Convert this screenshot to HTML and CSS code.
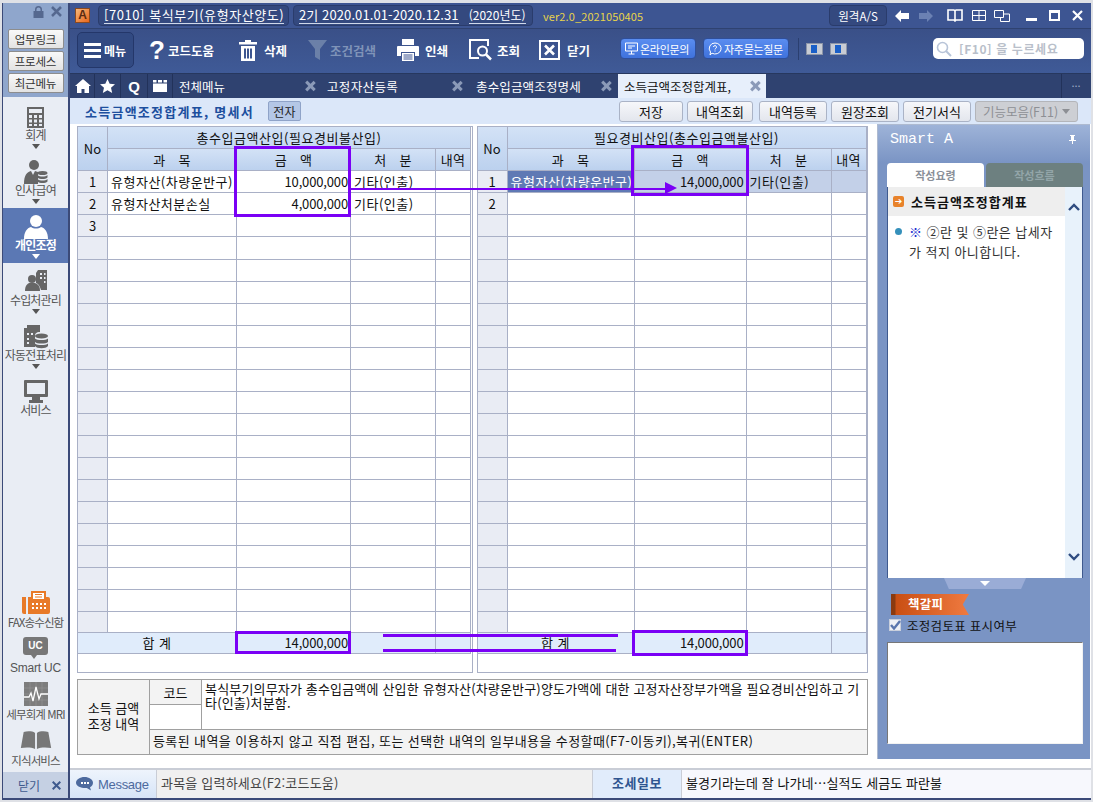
FILE: index.html
```html
<!DOCTYPE html>
<html lang="ko">
<head>
<meta charset="utf-8">
<title>소득금액조정합계표</title>
<link rel="stylesheet" href="styles.css">
</head>
<body>
<div class="window">
  <aside class="side">
    <div class="side-top">
      <div class="side-ctl">
        <svg width="11" height="12" viewBox="0 0 11 12"><path d="M2 5V3.500a3.500 3.500 0 0 1 7 0V5h1.500v7H.5V5zM3.500 5h4V3.500a2 2 0 0 0-4 0z" fill="#55688f"/></svg>
        <svg width="11" height="11" viewBox="0 0 11 11"><path d="M1 1l9 9M10 1l-9 9" stroke="#55688f" stroke-width="2.500"/></svg>
      </div>
      <button class="side-btn">업무링크</button>
      <button class="side-btn">프로세스</button>
      <button class="side-btn">최근메뉴</button>
    </div>
    <div class="side-item first">
      <svg width="17" height="21" viewBox="0 0 17 21"><path d="M0 0h17v21H0z" fill="#666"/><path d="M2 2h13v4H2z" fill="#e9edf4"/><path d="M2 8h3v3H2zM7 8h3v3H7zM12 8h3v3h-3zM2 12.500h3v3H2zM7 12.500h3v3H7zM12 12.500h3v3h-3zM2 17h3v2H2zM7 17h3v2H7zM12 17h3v2h-3z" fill="#e9edf4"/></svg>
      <span class="side-label">회계</span><i class="tri"></i>
    </div>
    <div class="side-item">
      <svg width="24" height="24" viewBox="0 0 24 24"><circle cx="10" cy="5" r="5" fill="#666"/><path d="M0 24c0-9 3-12 7-13l2 4 2-4c1 0 2 1 3 1v12z" fill="#666"/><ellipse cx="18.500" cy="13" rx="5" ry="2" fill="#666"/><path d="M13.500 15c2 2 8 2 10 0v2.500c-2 2-8 2-10 0zM13.500 19c2 2 8 2 10 0v2.500c-2 2-8 2-10 0z" fill="#666"/></svg>
      <span class="side-label">인사급여</span><i class="tri"></i>
    </div>
    <div class="side-item active">
      <svg width="24" height="24" viewBox="0 0 24 24"><circle cx="12" cy="6" r="6" fill="#fff"/><path d="M0 24c0-7 3-11 7-12 3 2 7 2 10 0 4 1 7 5 7 12z" fill="#fff"/></svg>
      <span class="side-label">개인조정</span><i class="tri"></i>
    </div>
    <div class="side-item">
      <svg width="22" height="22" viewBox="0 0 22 22"><path d="M13 0h9v20h-6c-1-3-2-6-5-7V3z" fill="#666"/><path d="M15 3h2v2h-2zM19 3h1.500v2H19zM15 7h2v2h-2zM19 7h1.500v2H19zM19 11h1.500v2H19z" fill="#e9edf4"/><circle cx="7" cy="9" r="4" fill="#666"/><path d="M0 21c0-5 2-7 4-8h6c3 1 5 3 5 8z" fill="#666"/></svg>
      <span class="side-label">수입처관리</span><i class="tri"></i>
    </div>
    <div class="side-item">
      <svg width="24" height="24" viewBox="0 0 24 24"><path d="M0 3h3V0h13v7c-4 0-5 2-5 4v11H0z" fill="#666"/><path d="M3 8h2v2H3zM7 8h2v2H7zM3 13h2v2H3zM3 17h2v2H3z" fill="#e9edf4"/><ellipse cx="17.500" cy="11" rx="6.500" ry="2.500" fill="#666"/><path d="M11 13.500c2 2 11 2 13 0V17c-2 2-11 2-13 0zM11 18.500c2 2 11 2 13 0V21c-2 3-11 3-13 0z" fill="#666"/></svg>
      <span class="side-label">자동전표처리</span><i class="tri"></i>
    </div>
    <div class="side-item">
      <svg width="24" height="23" viewBox="0 0 24 23"><path d="M1 0h22a1 1 0 0 1 1 1v15a1 1 0 0 1-1 1h-7v3h3v3H5v-3h3v-3H1a1 1 0 0 1-1-1V1a1 1 0 0 1 1-1zm2 3v11h18V3z" fill="#666"/></svg>
      <span class="side-label">서비스</span>
    </div>
    <div class="side-fill"></div>
    <div class="side-tool tool-fax">
      <svg width="28" height="23" viewBox="0 0 28 23"><path d="M0 6h4v17H2a2 2 0 0 1-2-2z" fill="#e87a28"/><path d="M6 6h3V0h15v6h2a2 2 0 0 1 2 2v13a2 2 0 0 1-2 2H6z" fill="#e87a28"/><path d="M11 2h11v6H11z" fill="#fff"/><path d="M13 3.500h7M13 6h7" stroke="#e87a28"/><path d="M10 12h2v2h-2zM14 12h2v2h-2zM18 12h2v2h-2zM22 12h2v2h-2zM10 16h2v2h-2zM14 16h2v2h-2zM18 16h2v2h-2zM22 16h2v2h-2z" fill="#fff"/></svg>
      <span class="tool-label">FAX송수신함</span>
    </div>
    <div class="side-tool tool-uc">
      <span class="uc">UC</span>
      <span class="tool-label latin">Smart UC</span>
    </div>
    <div class="side-tool tool-mri">
      <svg width="24" height="24" viewBox="0 0 24 24"><path d="M0 0h24v24H0z" fill="#7d7d7d"/><path d="M0 6h24M0 12h24M0 18h24M6 0v24M12 0v24M18 0v24" stroke="#999" stroke-width=".6"/><path d="M0 15h5l2-4 2 8 3-14 3 12 2-5h7" fill="none" stroke="#fff" stroke-width="1.300"/></svg>
      <span class="tool-label">세무회계 MRI</span>
    </div>
    <div class="side-tool tool-book">
      <svg width="32" height="18" viewBox="0 0 32 19"><path d="M3 1c4-1 9-1 12 1v17c-4-2-10-2-15-1zM29 1c-4-1-9-1-12 1v17c4-2 10-2 15-1z" fill="#777"/></svg>
      <span class="tool-label">지식서비스</span>
    </div>
    <div class="side-close"><span>닫기</span><svg width="9" height="9" viewBox="0 0 9 9"><path d="M.7.7l7.600 7.600M8.300.7L.7 8.300" stroke="#3f5a8e" stroke-width="2"/></svg></div>
  </aside>

  <main class="main">
    <header class="titlebar">
      <span class="logo">A</span>
      <div class="pill pill-a"><span>[7010] 복식부기(유형자산양도)</span></div>
      <div class="pill pill-b"><span>2기 2020.01.01-2020.12.31</span><span class="pill-year">(2020년도)</span></div>
      <span class="ver">ver2.0_2021050405</span>
      <button class="remote">원격A/S</button>
      <svg class="nav" width="14" height="12" viewBox="0 0 14 12"><path d="M0 6l6-6v3h8v6H6v3z" fill="#fff"/></svg>
      <svg class="nav-next" width="14" height="12" viewBox="0 0 14 12"><path d="M14 6L8 0v3H0v6h8v3z" fill="#6b81b3"/></svg>
      <svg class="win-book" width="16" height="13" viewBox="0 0 16 13"><path d="M1 1h6l1 1 1-1h6v10H9l-1 1-1-1H1zM8 2v9" fill="none" stroke="#fff" stroke-width="1.600"/></svg>
      <svg class="win-grid" width="14" height="11" viewBox="0 0 14 11"><path d="M.5.5h13v10H.5zM.5 5.500h13M7 .5v10" fill="none" stroke="#fff"/></svg>
      <svg class="win-tile" width="16" height="12" viewBox="0 0 16 12"><path d="M.5.5h9v7h-9zM9.500 4h6v7.500h-9V7.500" fill="none" stroke="#fff"/></svg>
      <span class="win-min"></span>
      <span class="win-max"></span>
      <svg class="win-x" width="11" height="11" viewBox="0 0 11 11"><path d="M1 1l9 9M10 1l-9 9" stroke="#fff" stroke-width="2.200"/></svg>
    </header>

    <nav class="toolbar">
      <button class="menu-btn">
        <svg width="17" height="15" viewBox="0 0 17 15"><path d="M0 0h17v3H0zM0 6h17v3H0zM0 12h17v3H0z" fill="#fff"/></svg>
        <span>메뉴</span>
      </button>
      <a class="tool t-help"><span class="q">?</span><span>코드도움</span></a>
      <a class="tool t-del">
        <svg width="18" height="21" viewBox="0 0 18 21"><path d="M6 0h6v2h6v2.500H0V2h6zM2 6h14v15H2zM5 8.500v10h2v-10zM8 8.500v10h2v-10zM11 8.500v10h2v-10z" fill="#fff" fill-rule="evenodd"/></svg>
        <span>삭제</span>
      </a>
      <a class="tool t-find dim">
        <svg width="19" height="20" viewBox="0 0 19 20"><path d="M0 0h19l-7 9v11l-5-3V9z" fill="#6b80a8"/></svg>
        <span>조건검색</span>
      </a>
      <a class="tool t-print">
        <svg width="22" height="22" viewBox="0 0 22 22"><path d="M5 0h12v6H5z" fill="#fff"/><path d="M0 8a1 1 0 0 1 1-1h20a1 1 0 0 1 1 1v9h-4v-4H4v4H0z" fill="#fff"/><path d="M5 14h12v8H5z" fill="#fff"/><path d="M6.500 16h9M6.500 18h9M6.500 20h9" stroke="#3d5592"/></svg>
        <span>인쇄</span>
      </a>
      <a class="tool t-view">
        <svg width="23" height="22" viewBox="0 0 23 22"><path d="M14 1H1v18h9" fill="none" stroke="#fff" stroke-width="2"/><path d="M1 1h18v6" fill="none" stroke="#fff" stroke-width="2"/><circle cx="13.500" cy="12" r="4.500" fill="none" stroke="#fff" stroke-width="2"/><path d="M17 15.500l5 5" stroke="#fff" stroke-width="2.500"/></svg>
        <span>조회</span>
      </a>
      <a class="tool t-close">
        <svg width="21" height="20" viewBox="0 0 21 20"><path d="M1 1h19v18H1z" fill="none" stroke="#fff" stroke-width="2"/><path d="M6 5.500l9 9M15 5.500l-9 9" stroke="#fff" stroke-width="2.600"/></svg>
        <span>닫기</span>
      </a>
      <button class="blue-btn b-online">
        <svg width="13" height="13" viewBox="0 0 13 13"><path d="M.5 1h12v8h-12zM6.500 9v3M3.500 12h6M3 4h7M3 6h4" fill="none" stroke="#fff"/></svg>
        <span>온라인문의</span>
      </button>
      <button class="blue-btn b-faq">
        <svg width="14" height="14" viewBox="0 0 14 14"><path d="M7 1a6 5.500 0 1 1-3 10.200L2 13l.5-3A5.500 5.500 0 0 1 7 1z" fill="none" stroke="#fff"/><path d="M5.500 5a1.500 1.500 0 1 1 2 1.500L7 7.500M7 8.500v1" fill="none" stroke="#fff"/></svg>
        <span>자주묻는질문</span>
      </button>
      <span class="tb-sep"></span>
      <span class="mini m1"><i></i></span>
      <span class="mini m2"><i></i></span>
      <div class="search">
        <svg width="16" height="16" viewBox="0 0 16 16"><circle cx="6.500" cy="6.500" r="5" fill="none" stroke="#b8c4d8" stroke-width="1.600"/><path d="M10 10l5 5" stroke="#b8c4d8" stroke-width="2"/></svg>
        <span>[F10] 을 누르세요</span>
      </div>
    </nav>

    <nav class="tabs">
      <span class="tab-ic ti1"><svg width="16" height="14" viewBox="0 0 16 14"><path d="M8 0l8 7h-2v7H9.500v-4h-3v4H2V7H0z" fill="#fff"/></svg></span>
      <span class="tab-ic"><svg width="15" height="14" viewBox="0 0 15 14"><path d="M7.500 0l2.200 4.800 5.300.5-4 3.500 1.200 5.200-4.700-2.800-4.700 2.800L4 8.800 0 5.300l5.300-.5z" fill="#fff"/></svg></span>
      <span class="tab-ic ti3">Q</span>
      <span class="tab-ic ti4"><svg width="14" height="12" viewBox="0 0 14 12"><path d="M0 3.500h14V12H0zM0 0h3.500v2.500H0zM5 0h4v2.500H5zM10.500 0H14v2.500h-3.500z" fill="#fff"/></svg></span>
      <span class="tab t1"><span>전체메뉴</span><i class="x"></i></span>
      <span class="tab t2"><span>고정자산등록</span><i class="x"></i></span>
      <span class="tab t3"><span>총수입금액조정명세</span><i class="x"></i></span>
      <span class="tab t4 on"><span>소득금액조정합계표,</span><i class="x"></i></span>
      <span class="tab-more">•••</span>
    </nav>

    <div class="subhead">
      <h1>소득금액조정합계표, 명세서</h1>
      <button class="etax">전자</button>
      <div class="actions">
        <button class="act a1">저장</button>
        <button class="act a2">내역조회</button>
        <button class="act a3">내역등록</button>
        <button class="act a4">원장조회</button>
        <button class="act a4">전기서식</button>
        <button class="act a5">기능모음(F11)<i></i></button>
      </div>
    </div>

    <div class="content">
      <section class="work">
        <div class="grids">
          <div class="gridbox gb-left">
            <table class="grid">
              <colgroup><col class="c-no"><col class="c-l1"><col class="c-l2"><col class="c-3"><col class="c-4"></colgroup>
              <thead>
                <tr><th rowspan="2">No</th><th colspan="4" class="group">총수입금액산입(필요경비불산입)</th></tr>
                <tr><th>과&emsp;목</th><th>금&emsp;액</th><th>처&emsp;분</th><th>내역</th></tr>
              </thead>
              <tbody>
                <tr><td class="no">1</td><td>유형자산(차량운반구)</td><td class="num">10,000,000</td><td>기타(인출)</td><td></td></tr>
                <tr><td class="no">2</td><td>유형자산처분손실</td><td class="num">4,000,000</td><td>기타(인출)</td><td></td></tr>
                <tr><td class="no">3</td><td></td><td></td><td></td><td></td></tr>
                <tr class="tall"><td class="no"></td><td></td><td></td><td></td><td></td></tr>
                <tr><td class="no"></td><td></td><td></td><td></td><td></td></tr>
                <tr><td class="no"></td><td></td><td></td><td></td><td></td></tr>
                <tr><td class="no"></td><td></td><td></td><td></td><td></td></tr>
                <tr><td class="no"></td><td></td><td></td><td></td><td></td></tr>
                <tr><td class="no"></td><td></td><td></td><td></td><td></td></tr>
                <tr><td class="no"></td><td></td><td></td><td></td><td></td></tr>
                <tr><td class="no"></td><td></td><td></td><td></td><td></td></tr>
                <tr><td class="no"></td><td></td><td></td><td></td><td></td></tr>
                <tr><td class="no"></td><td></td><td></td><td></td><td></td></tr>
                <tr><td class="no"></td><td></td><td></td><td></td><td></td></tr>
                <tr><td class="no"></td><td></td><td></td><td></td><td></td></tr>
                <tr><td class="no"></td><td></td><td></td><td></td><td></td></tr>
                <tr><td class="no"></td><td></td><td></td><td></td><td></td></tr>
                <tr><td class="no"></td><td></td><td></td><td></td><td></td></tr>
                <tr><td class="no"></td><td></td><td></td><td></td><td></td></tr>
                <tr><td class="no"></td><td></td><td></td><td></td><td></td></tr>
                <tr class="short"><td class="no"></td><td></td><td></td><td></td><td></td></tr>
                <tr class="sum"><td colspan="2" class="sum-label">합 계</td><td class="num">14,000,000</td><td></td><td></td></tr>
              </tbody>
            </table>
          </div>
          <div class="gridbox gb-right">
            <table class="grid">
              <colgroup><col class="c-no"><col class="c-r1"><col class="c-r2"><col class="c-3"><col class="c-4"></colgroup>
              <thead>
                <tr><th rowspan="2">No</th><th colspan="4" class="group">필요경비산입(총수입금액불산입)</th></tr>
                <tr><th>과&emsp;목</th><th>금&emsp;액</th><th>처&emsp;분</th><th>내역</th></tr>
              </thead>
              <tbody>
                <tr class="sel"><td class="no">1</td><td class="cur">유형자산(차량운반구)</td><td class="num">14,000,000</td><td>기타(인출)</td><td></td></tr>
                <tr><td class="no">2</td><td></td><td></td><td></td><td></td></tr>
                <tr><td class="no"></td><td></td><td></td><td></td><td></td></tr>
                <tr class="tall"><td class="no"></td><td></td><td></td><td></td><td></td></tr>
                <tr><td class="no"></td><td></td><td></td><td></td><td></td></tr>
                <tr><td class="no"></td><td></td><td></td><td></td><td></td></tr>
                <tr><td class="no"></td><td></td><td></td><td></td><td></td></tr>
                <tr><td class="no"></td><td></td><td></td><td></td><td></td></tr>
                <tr><td class="no"></td><td></td><td></td><td></td><td></td></tr>
                <tr><td class="no"></td><td></td><td></td><td></td><td></td></tr>
                <tr><td class="no"></td><td></td><td></td><td></td><td></td></tr>
                <tr><td class="no"></td><td></td><td></td><td></td><td></td></tr>
                <tr><td class="no"></td><td></td><td></td><td></td><td></td></tr>
                <tr><td class="no"></td><td></td><td></td><td></td><td></td></tr>
                <tr><td class="no"></td><td></td><td></td><td></td><td></td></tr>
                <tr><td class="no"></td><td></td><td></td><td></td><td></td></tr>
                <tr><td class="no"></td><td></td><td></td><td></td><td></td></tr>
                <tr><td class="no"></td><td></td><td></td><td></td><td></td></tr>
                <tr><td class="no"></td><td></td><td></td><td></td><td></td></tr>
                <tr><td class="no"></td><td></td><td></td><td></td><td></td></tr>
                <tr class="short"><td class="no"></td><td></td><td></td><td></td><td></td></tr>
                <tr class="sum"><td colspan="2" class="sum-label">합 계</td><td class="num">14,000,000</td><td></td><td></td></tr>
              </tbody>
            </table>
          </div>
        </div>
        <div class="detail">
          <div class="d-label">소득 금액<br>조정 내역</div>
          <div class="d-code">코드</div>
          <div class="d-empty"></div>
          <div class="d-text">복식부기의무자가 총수입금액에 산입한 유형자산(차량운반구)양도가액에 대한 고정자산장부가액을 필요경비산입하고 기타(인출)처분함.</div>
          <div class="d-note">등록된 내역을 이용하지 않고 직접 편집, 또는 선택한 내역의 일부내용을 수정할때(F7-이동키),복귀(ENTER)</div>
        </div>
      </section>

      <aside class="smart">
        <div class="smart-title"><span>Smart A</span>
          <svg width="7" height="9" viewBox="0 0 7 9"><path d="M1 0h5v1H5v4h2v1H4v3H3V6H0V5h2V1H1z" fill="#fff"/></svg>
        </div>
        <div class="smart-tabs"><span class="st on">작성요령</span><span class="st">작성흐름</span></div>
        <div class="smart-body">
          <div class="smart-scroll">
            <svg width="12" height="8" viewBox="0 0 12 8"><path d="M1 7l5-5 5 5" fill="none" stroke="#2f4c80" stroke-width="2.400"/></svg>
            <svg width="12" height="8" viewBox="0 0 12 8"><path d="M1 1l5 5 5-5" fill="none" stroke="#2f4c80" stroke-width="2.400"/></svg>
          </div>
          <div class="smart-main">
            <div class="smart-head"><span class="s-arrow">➔</span><b>소득금액조정합계표</b></div>
            <div class="smart-text"><i class="dot"></i><p><span class="blue">※</span> ②란 및 ⑤란은 납세자<br>가 적지 아니합니다.</p></div>
          </div>
        </div>
        <div class="smart-handle"><i></i></div>
        <div class="ribbon"><span>책갈피</span></div>
        <label class="check"><span class="box"><svg width="11" height="10" viewBox="0 0 11 10"><path d="M1 5l3 3.500L10 1" fill="none" stroke="#5a76ae" stroke-width="2.400"/></svg></span>조정검토표 표시여부</label>
        <div class="memo"></div>
      </aside>
    </div>

    <footer class="status">
      <div class="msg-tag">
        <svg width="17" height="14" viewBox="0 0 17 14"><path d="M8.500 0C13 0 17 2.500 17 5.800c0 2-1.300 3.500-3 4.500l1 3.200-4.200-2.600C7 11.500 0 10 0 5.800 0 2.500 4 0 8.500 0z" fill="#4d6a9e"/><path d="M5 5h2v2H5zM8 5h2v2H8zM11 5h2v2h-2z" fill="#fff"/></svg>
        <span>Message</span>
      </div>
      <div class="msg-text">과목을 입력하세요(F2:코드도움)</div>
      <div class="news-tag">조세일보</div>
      <div class="news-text">불경기라는데 잘 나가네…실적도 세금도 파란불</div>
    </footer>
  </main>

  <div class="mark m-box1"></div>
  <div class="mark m-box2"></div>
  <div class="mark m-box3"></div>
  <div class="mark m-box4"></div>
  <div class="mark-line l-arrow"></div>
  <div class="mark-head"></div>
  <div class="mark-line l-top"></div>
  <div class="mark-line l-bot"></div>
</div>
</body>
</html>
```
FILE: styles.css
```css
* { box-sizing: border-box; }
html, body { margin: 0; height: 100%; }
body {
  background: #dfe1e6;
  font-family: "Noto Sans CJK KR", "Liberation Sans", sans-serif;
  font-size: 12px;
  color: #111;
  overflow: hidden;
  padding: 3px 0 0 2px;
}
button { font-family: inherit; margin: 0; padding: 0; cursor: default; }
svg { display: block; flex: none; }

.window {
  position: relative;
  width: 1089px; height: 797px;
  display: flex;
  border-left: 1px solid #3b4a78;
  border-bottom: 2px solid #3b4a78;
  background: #fff;
}

/* sidebar */
.side {
  width: 65px; flex: none;
  background: #e9edf4;
  display: flex; flex-direction: column; align-items: stretch;
}
.side-top {
  height: 94px; flex: none;
  background: #8fa6cc;
  display: flex; flex-direction: column; align-items: center;
  gap: 2px;
  padding-top: 3px;
}
.side-ctl { display: flex; gap: 7px; align-self: flex-end; padding-right: 6px; height: 21px; }
.side-btn {
  width: 56px; height: 20px;
  background: linear-gradient(#f9f9f9, #e3e3e3);
  border: 1px solid #8d8d8d;
  border-radius: 2px;
  font-size: 11.500px; color: #333;
  letter-spacing: -.2px;
  line-height: 16px;
}
.side-item {
  height: 55px; flex: none;
  display: grid;
  grid-template-rows: 23px 14px 7px;
  justify-items: center;
  padding-top: 7px;
  color: #555;
}
.side-item.first { height: 56px; padding-top: 8px; }
.side-item.first svg { margin-top: 2px; }
.side-label {
  font-size: 12px; line-height: 14px;
  letter-spacing: -.8px; white-space: nowrap;
}
.side-item.active { background: #5b78b4; color: #fff; font-weight: 700; }
.tri {
  width: 0; height: 0; margin-top: 2px;
  border-left: 4px solid transparent;
  border-right: 4px solid transparent;
  border-top: 5px solid #555;
}
.active .tri { border-top-color: #fff; }
.side-fill { flex: 1; }
.side-tool {
  display: flex; flex-direction: column; align-items: center;
  flex: none;
  justify-content: flex-end;
  color: #555;
  padding-bottom: 2px;
}
.tool-fax { height: 48px; }
.tool-uc { height: 46px; }
.tool-mri { height: 46px; }
.tool-book { height: 46px; }
.tool-label { font-size: 11.500px; line-height: 14px; letter-spacing: -.9px; white-space: nowrap; margin-top: 1px; }
.tool-label.latin { font-family: "Liberation Sans", sans-serif; font-size: 12px; letter-spacing: -.2px; }
.tool-book svg { margin-bottom: 3px; }
.uc {
  width: 25px; height: 18px;
  margin-bottom: 5px;
  background: #777; color: #fff;
  border-radius: 3px;
  font: 700 10px/18px "Liberation Sans", sans-serif;
  text-align: center;
  position: relative;
}
.uc::after {
  content: ""; position: absolute; left: 8px; top: 18px;
  border-left: 3px solid transparent; border-right: 3px solid transparent; border-top: 4px solid #777;
}
.side-close {
  height: 26px; flex: none;
  background: #c5d0e3;
  display: flex; align-items: center; gap: 12px;
  padding-left: 15px;
  color: #3f5a8e; font-size: 12px;
  margin-top: 3px;
}

.main { flex: 1; min-width: 0; display: flex; flex-direction: column; border-left: 2px solid #3b4a78; }

/* title bar */
.titlebar {
  height: 25px; flex: none;
  background: #3d5592;
  display: flex; align-items: center;
  color: #fff;
  padding-left: 5px;
}
.logo {
  width: 15px; height: 15px; flex: none;
  background: linear-gradient(135deg, #f7b87a, #e8661c);
  border: 1px solid #8a4a20;
  color: #5a2a10; font: 700 12px/13px "Liberation Sans", sans-serif; text-align: center;
}
.pill {
  height: 21px; flex: none;
  background: #34497f;
  border: 1px solid #2a3c6c;
  border-radius: 4px;
  display: flex; align-items: center;
  color: #fff; font-size: 13px; white-space: nowrap;
}
.pill span { border-bottom: 1px solid #cfd8ea; line-height: 16px; height: 17px; }
.pill-a { width: 191px; margin-left: 8px; padding-left: 5px; letter-spacing: .55px; }
.pill-b { width: 240px; margin-left: 4px; padding-left: 5px; letter-spacing: .1px; gap: 10px; }
.pill-b .pill-year { font-size: 12px; letter-spacing: 0; }
.ver { margin-left: 10px; color: #e8d44a; font-size: 11px; letter-spacing: .1px; width: 110px; flex: none; white-space: nowrap; }
.remote {
  margin-left: 176px; flex: none;
  width: 58px; height: 21px;
  background: #34497f; color: #fff;
  border: 1px solid #2a3c6c; border-radius: 4px;
  font-size: 11.500px;
}
.nav { margin-left: 8px; }
.nav-next { margin-left: 10px; }
.win-book { margin-left: 14px; }
.win-grid { margin-left: 9px; }
.win-tile { margin-left: 8px; }
.win-min { margin-left: 16px; width: 11px; height: 3px; background: #fff; flex: none; align-self: flex-start; margin-top: 15px; }
.win-max { margin-left: 12px; width: 11px; height: 11px; border: 2px solid #fff; border-top-width: 3px; flex: none; }
.win-x { margin-left: 12px; }

/* toolbar */
.toolbar {
  height: 45px; flex: none;
  background: linear-gradient(#3a5088, #3f5a97);
  border-top: 1px solid #2f4270;
  display: flex; align-items: flex-start;
}
.menu-btn {
  margin: 3px 0 0 7px;
  width: 57px; height: 36px; flex: none;
  background: #324a82;
  border: 1px solid #24376a; border-radius: 5px;
  color: #fff; font-weight: 700; font-size: 12px;
  display: flex; align-items: center; gap: 3px;
  padding-left: 6px;
}
.tool {
  height: 42px; flex: none;
  display: flex; align-items: center; gap: 5px;
  color: #fff; font-weight: 700; font-size: 12.500px; white-space: nowrap;
}
.tool.dim { color: #7f93b8; }
.q { font: 700 26px/26px "Liberation Sans", sans-serif; width: 14px; }
.t-help { margin-left: 15px; width: 90px; }
.t-del { width: 69px; gap: 7px; }
.t-find { width: 89px; gap: 3px; }
.t-print { width: 72px; gap: 6px; }
.t-view { width: 70px; gap: 5px; }
.t-close { width: 81px; gap: 7px; }
.blue-btn {
  margin-top: 9px; height: 21px; flex: none;
  background: linear-gradient(#5a8df0, #3f72dc);
  border: 1px solid #2f4f9a; border-radius: 4px;
  color: #fff; font-size: 11px; letter-spacing: -.3px;
  display: flex; align-items: center; gap: 2px;
  padding-left: 4px;
  white-space: nowrap;
}
.b-online { width: 76px; }
.b-faq { width: 86px; margin-left: 7px; }
.tb-sep { margin: 9px 0 0 9px; width: 1px; height: 22px; background: #2b3f70; flex: none; }
.mini {
  margin-top: 14px; width: 17px; height: 12px; flex: none;
  background: #c8ccd4; border: 1px solid #8c95a8;
}
.mini i { display: block; width: 6px; height: 8px; margin: 1px 0 0 4px; background: #1a5fc8; }
.m1 { margin-left: 7px; }
.m2 { margin-left: 7px; }
.search {
  margin: 9px 0 0 86px;
  width: 151px; height: 21px; flex: none;
  background: #fff; border-radius: 5px;
  display: flex; align-items: center; gap: 7px;
  padding-left: 3px;
  color: #b9bfca; font-weight: 700; font-size: 12px; letter-spacing: .6px; white-space: nowrap;
}

/* tabs */
.tabs {
  height: 25px; flex: none;
  background: #2f4270;
  display: flex; align-items: stretch;
  border-top: 1px solid #27385f;
  color: #fff;
}
.tab-ic {
  width: 26px;
  display: flex; align-items: center; justify-content: center;
  border-right: 1px solid #22325a;
  font: 700 15px "Liberation Sans", sans-serif;
}
.ti1 { width: 25px; padding-left: 2px; }
.ti3 { width: 27px; }
.ti4 { width: 25px; }
.tab {
  display: flex; align-items: center; justify-content: space-between;
  font-size: 12.500px; white-space: nowrap;
}
.x { width: 10px; height: 10px; position: relative; flex: none; }
.x::before, .x::after {
  content: ""; position: absolute; left: 4px; top: -1px;
  width: 2.500px; height: 12px; background: #8b9ab8;
  transform: rotate(45deg);
}
.x::after { transform: rotate(-45deg); }
.t1 { width: 143px; padding-left: 6px; padding-right: 1px; }
.t2 { width: 149px; padding-left: 11px; padding-right: 3px; letter-spacing: .35px; }
.t3 { width: 148px; padding-left: 11px; padding-right: 2px; letter-spacing: .15px; }
.tab.on {
  width: 148px;
  margin-left: 5px;
  padding-left: 6px; padding-right: 6px;
  background: #e7effb; color: #111;
}
.tab-more {
  margin-left: auto; width: 30px;
  border-left: 1px solid #22325a;
  font-size: 6px; color: #9aa8c4; text-align: center; line-height: 24px; letter-spacing: 1px;
}

/* sub header */
.subhead {
  height: 26px; flex: none;
  background: #dbe7f9;
  display: flex; align-items: center;
  padding: 0 13px 0 15px;
}
.subhead h1 { margin: 0; font-size: 13px; font-weight: 700; color: #1d4f9e; letter-spacing: 1.250px; white-space: nowrap; }
.etax {
  margin-left: 14px;
  width: 33px; height: 20px; flex: none;
  background: #b4c7e6; border: 1px solid #8fa3c8; border-radius: 2px;
  font-size: 12px; color: #222;
}
.actions { display: flex; gap: 4px; margin-left: auto; }
.act {
  height: 21px;
  background: linear-gradient(#f6f7fa, #e3e6ed);
  border: 1px solid #aab3c6; border-radius: 3px;
  font-size: 13px; color: #111; white-space: nowrap;
}
.a1 { width: 64px; }
.a2 { width: 66px; margin-right: 2px; }
.a3 { width: 68px; }
.a4 { width: 68px; }
.a5 {
  width: 103px; font-size: 12.500px;
  background: #cdcfd4; color: #8d8f94; border-color: #b3b5ba;
  display: flex; align-items: center; justify-content: center; gap: 4px;
}
.a5 i { width: 0; height: 0; border-left: 4px solid transparent; border-right: 4px solid transparent; border-top: 5px solid #8d8f94; }

/* content */
.content { flex: 1; min-height: 0; display: flex; background: #fff; padding-left: 7px; }
.work { width: 791px; flex: none; padding-top: 2px; }
.grids { display: flex; gap: 4px; height: 547px; }
.gridbox { border: 1px solid #a9b0c6; background: #fff; height: 547px; overflow: hidden; }
.gb-left { width: 396px; }
.gb-right { width: 392px; }

.grid { border-collapse: separate; border-spacing: 0; table-layout: fixed; }
.gb-left .grid { width: 393px; }
.gb-right .grid { width: 389px; }
.c-no { width: 30px; }
.c-l1 { width: 129px; }
.c-l2 { width: 114px; }
.c-r1 { width: 127px; }
.c-r2 { width: 112px; }
.c-3 { width: 85px; }
.c-4 { width: 35px; }
.grid th, .grid td {
  height: 22px; padding: 0;
  border-right: 1px solid #a9b0c6;
  border-bottom: 1px solid #a9b0c6;
  font-size: 13px; line-height: 20px; font-weight: 400;
  white-space: nowrap; overflow: hidden;
}
.grid th { background: linear-gradient(#d3e2f6, #bcd1ee); text-align: center; letter-spacing: .2px; }
.grid .group { background: linear-gradient(#d3e2f6, #c5d8f2); letter-spacing: .55px; }
.grid td { padding-left: 3px; letter-spacing: .5px; }
.grid td.no { padding: 0; text-align: center; background: #e9ecf4; letter-spacing: 0; }
.grid td.num { text-align: right; padding: 0 2px 0 0; letter-spacing: -.15px; }
.grid tr.tall td { height: 23px; }
.grid tr.short td { height: 21px; }
.grid tr.sum td { height: 21px; background: #e0ecfb; }
.grid td.sum-label { text-align: center; padding: 0; letter-spacing: .5px; }
.grid tr.sel td { background: #c3d0e8; }
.grid tr.sel td.no { background: #e9ecf4; }
.grid tr.sel td.cur { background: #5f79b4; color: #fff; }

/* detail box */
.detail {
  margin-top: 6px;
  width: 791px; height: 76px;
  display: grid;
  grid-template-columns: 72px 52px 1fr;
  grid-template-rows: 25px 25px 1fr;
  border: 1px solid #a0a0a0;
  background: #fff;
  font-size: 13px;
}
.d-label {
  grid-row: 1 / 4; background: #f3f3f3;
  border-right: 1px solid #a0a0a0;
  display: flex; align-items: center; justify-content: center; text-align: center;
  line-height: 16px; padding-bottom: 2px;
}
.d-code {
  background: #f3f3f3;
  border-right: 1px solid #a0a0a0; border-bottom: 1px solid #a0a0a0;
  display: flex; align-items: center; justify-content: center;
}
.d-empty { grid-row: 2; grid-column: 2; border-right: 1px solid #a0a0a0; border-bottom: 1px solid #a0a0a0; }
.d-text {
  grid-row: 1 / 3; grid-column: 3;
  border-bottom: 1px solid #a0a0a0;
  padding: 2px 2px 0 3px;
  line-height: 14px; letter-spacing: .17px;
}
.d-note {
  grid-column: 2 / 4; background: #f3f3f3;
  padding-left: 3px; line-height: 22px; letter-spacing: .4px; white-space: nowrap;
}

/* smart panel */
.smart {
  width: 213px; height: 635px;
  margin-left: 9px;
  background: #7a94c4;
  display: flex; flex-direction: column;
  padding: 0 7px 0 9px;
  border: 1px solid #aebad0;
  border-bottom: 0; border-right: 0;
}
.smart-title {
  height: 38px; flex: none;
  margin: 0 -7px 0 -9px; padding: 0 14px 10px 12px;
  background: linear-gradient(#9eb3d8, #7a94c4);
  display: flex; align-items: center; justify-content: space-between;
  color: #fff; font: 15px "Liberation Mono", monospace;
}
.smart-tabs { display: flex; gap: 2px; height: 24px; flex: none; }
.st {
  flex: 1; text-align: center;
  background: #6d8080; color: #93a5a8; font-weight: 700; font-size: 11px; line-height: 24px;
  border-radius: 4px 4px 0 0;
}
.st.on { background: #fff; color: #8a8f98; }
.smart-body {
  height: 391px; flex: none;
  display: flex; flex-direction: row-reverse;
  background: #fff;
  border: 1px solid #3f5a8e; border-top: 0; border-bottom: 0;
}
.smart-main { flex: 1; min-width: 0; }
.smart-scroll {
  width: 17px; background: #e8f2fb;
  display: flex; flex-direction: column; justify-content: space-between; align-items: center;
  padding: 16px 0 17px;
}
.smart-head {
  height: 29px;
  background: #eeeeee;
  display: flex; align-items: center; gap: 7px;
  padding-left: 5px;
  font-size: 13px; letter-spacing: 1px;
}
.s-arrow {
  width: 11px; height: 11px; flex: none;
  background: #e8822a; color: #fff; border-radius: 2px;
  font: 9px/11px "DejaVu Sans", sans-serif; text-align: center; letter-spacing: 0;
}
.smart-text { display: flex; padding: 6px 0 0 7px; gap: 7px; color: #333; }
.dot { width: 7px; height: 7px; border-radius: 50%; background: #3590bb; margin-top: 6px; flex: none; }
.smart-text p { margin: 0; font-size: 13px; line-height: 20px; letter-spacing: .45px; white-space: nowrap; }
.blue { color: #1a2fd0; }
.smart-handle {
  width: 82px; height: 11px; flex: none;
  margin-left: 57px;
  background: #9aacd6;
  clip-path: polygon(0 0, 100% 0, 94% 100%, 6% 100%);
  display: flex; justify-content: center; padding-top: 3px;
}
.smart-handle i { width: 0; height: 0; border-left: 5px solid transparent; border-right: 5px solid transparent; border-top: 5px solid #fff; }
.ribbon {
  width: 78px; height: 21px; flex: none;
  margin: 5px 0 0 4px;
  background: linear-gradient(90deg, #8a3a10 0, #8a3a10 4px, #c94f14 5px, #ef7a40);
  clip-path: polygon(0 0, 100% 0, 92% 50%, 100% 100%, 0 100%);
  color: #fff; font-weight: 700; font-size: 12.500px; line-height: 20px;
  padding-left: 17px; letter-spacing: .2px;
}
.check {
  display: flex; align-items: center; gap: 6px;
  height: 22px; margin: -1px 0 0 2px; font-size: 12.500px; letter-spacing: .3px; color: #111; white-space: nowrap;
  flex: none;
}
.box { width: 12px; height: 12px; background: #eef0f6; border: 1px solid #c9cfdc; display: flex; align-items: center; justify-content: center; flex: none; }
.memo { height: 102px; flex: none; margin-top: 6px; background: #fff; border: 1px solid #f2f2f2; border-top-color: #777; border-left-color: #777; }

/* status */
.status {
  height: 30px; flex: none;
  display: flex;
  border-top: 2px solid #c9cdd6;
  background: #f0f0f0;
}
.msg-tag {
  width: 87px; flex: none;
  background: linear-gradient(#eef4fc, #d6e4f8);
  border-right: 1px solid #c9cdd6;
  display: flex; align-items: center; gap: 5px; padding-left: 6px;
  color: #4d6a9e; font: 13px "Liberation Sans", sans-serif; letter-spacing: -.3px;
}
.msg-text { width: 435px; flex: none; padding-left: 4px; font-size: 13px; line-height: 26px; color: #444; letter-spacing: .2px; white-space: nowrap; }
.news-tag {
  width: 90px; flex: none;
  background: #e1ecfb;
  border: 1px solid #c9cdd6; border-width: 0 1px;
  color: #2f5590; font-weight: 700; font-size: 13px; text-align: center; line-height: 26px; letter-spacing: .6px;
}
.news-text { flex: 1; background: #f7f8fd; padding-left: 4px; font-size: 13px; line-height: 26px; letter-spacing: .05px; white-space: nowrap; }

/* purple annotations, drawn over the screen capture */
.mark { position: absolute; border: 3px solid #7a00f5; pointer-events: none; }
.m-box1 { left: 231px; top: 143px; width: 117px; height: 71px; }
.m-box2 { left: 628px; top: 142px; width: 118px; height: 51px; }
.m-box3 { left: 232px; top: 628px; width: 116px; height: 23px; }
.m-box4 { left: 629px; top: 627px; width: 116px; height: 26px; }
.mark-line { position: absolute; background: #7a00f5; }
.l-arrow { left: 347px; top: 185px; width: 316px; height: 2px; }
.mark-head {
  position: absolute; left: 662px; top: 179px;
  border-left: 12px solid #7a00f5;
  border-top: 6px solid transparent;
  border-bottom: 6px solid transparent;
}
.l-top { left: 380px; top: 631px; width: 235px; height: 2.500px; }
.l-bot { left: 380px; top: 646px; width: 233px; height: 2.500px; }
```
